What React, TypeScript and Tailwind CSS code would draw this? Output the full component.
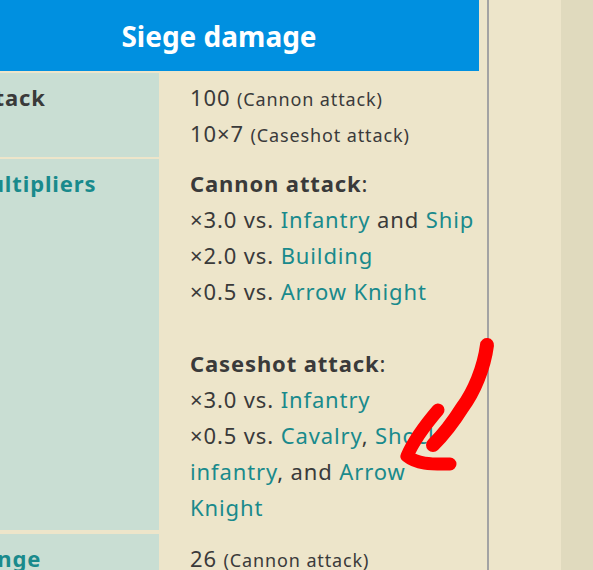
import React from 'react'

const font = { fontFamily: '"Noto Sans", "Open Sans", sans-serif' }

const Link: React.FC<{ children: React.ReactNode }> = ({ children }) => (
  <span className="text-[#198a8c]">{children}</span>
)

const Small: React.FC<{ children: React.ReactNode }> = ({ children }) => (
  <span className="text-[18px] leading-none">{children}</span>
)

const RedArrow = () => (
  <svg
    className="absolute inset-0 pointer-events-none"
    width="593"
    height="570"
    viewBox="0 0 593 570"
  >
    <path
      d="M487,345 C484,368 474,392 462,408 C452,424 442,436 433,445"
      fill="none"
      stroke="#ff0000"
      strokeWidth="14"
      strokeLinecap="round"
      strokeLinejoin="round"
    />
    <path
      d="M438,410 C426,424 414,440 407,456 C418,465 434,464 450,464"
      fill="none"
      stroke="#ff0000"
      strokeWidth="13"
      strokeLinecap="round"
      strokeLinejoin="round"
    />
  </svg>
)

export default function App() {
  return (
    <div
      className="relative w-[593px] h-[570px] overflow-hidden bg-[#ede5ca] flex text-[22px] tracking-[0.04em] text-[#3a3a3a]"
      style={font}
    >
      {/* page column */}
      <div className="w-[561px] flex shrink-0">
        <div className="w-[487px] shrink-0 overflow-hidden">
          <div className="ml-[-32px] w-[511px] flex flex-col gap-[2px]">
            {/* header */}
            <div className="h-[71px] bg-[#0090e0] flex items-center justify-center pr-[9px]">
              <span className="text-white font-bold text-[28px] tracking-normal">Siege damage</span>
            </div>

            {/* Attack */}
            <div className="flex leading-[36px]">
              <div className="w-[191px] shrink-0 bg-[#c9ded3] py-[6px] font-bold h-[84px]">Attack</div>
              <div className="flex-1 pl-[31px] py-[6px] whitespace-nowrap">
                <div>
                  100 <Small>(Cannon attack)</Small>
                </div>
                <div>
                  10×7 <Small>(Caseshot attack)</Small>
                </div>
              </div>
            </div>

            {/* Multipliers */}
            <div className="flex leading-[36px]">
              <div className="w-[191px] shrink-0 bg-[#c9ded3] py-[6px] font-bold h-[371px]">
                <Link>Multipliers</Link>
              </div>
              <div className="flex-1 pl-[31px] py-[6px] whitespace-nowrap">
                <div>
                  <b>Cannon attack</b>:
                </div>
                <div>
                  ×3.0 vs. <Link>Infantry</Link> and <Link>Ship</Link>
                </div>
                <div>
                  ×2.0 vs. <Link>Building</Link>
                </div>
                <div>
                  ×0.5 vs. <Link>Arrow Knight</Link>
                </div>
                <div className="h-[36px]" />
                <div>
                  <b>Caseshot attack</b>:
                </div>
                <div>
                  ×3.0 vs. <Link>Infantry</Link>
                </div>
                <div>
                  ×0.5 vs. <Link>Cavalry</Link>, <Link>Shock</Link>
                </div>
                <div>
                  <Link>infantry</Link>, and <Link>Arrow</Link>
                </div>
                <div>
                  <Link>Knight</Link>
                </div>
              </div>
            </div>

            {/* Range */}
            <div className="flex leading-[36px] mt-[1px]">
              <div className="w-[191px] shrink-0 bg-[#c9ded3] py-[6px] font-bold h-[84px]">
                <Link>Range</Link>
              </div>
              <div className="flex-1 pl-[31px] py-[6px] whitespace-nowrap">
                <div>
                  26 <Small>(Cannon attack)</Small>
                </div>
              </div>
            </div>
          </div>
        </div>
        <div className="w-[2px] shrink-0 bg-[#a3a3a3]" />
        <div className="flex-1" />
      </div>
      {/* right rail */}
      <div className="flex-1 bg-[#e0dabe]" />

      <RedArrow />
    </div>
  )
}
